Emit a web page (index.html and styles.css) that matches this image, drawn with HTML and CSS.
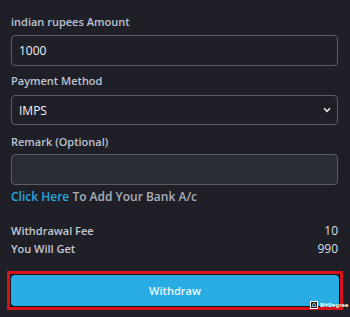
FILE: index.html
```html
<!DOCTYPE html>
<html>
<head>
<meta charset="utf-8">
<link rel="stylesheet" href="styles.css">
</head>
<body>
<div class="page">
  <div class="field f1">
    <div class="label">indian rupees Amount</div>
    <div class="input">1000</div>
  </div>
  <div class="field f2">
    <div class="label">Payment Method</div>
    <div class="input select">
      <span>IMPS</span>
      <svg class="chev" width="8" height="6" viewBox="0 0 8 6"><path d="M1 1.2 L4 4.4 L7 1.2" fill="none" stroke="#e6e8ee" stroke-width="1.6"/></svg>
    </div>
  </div>
  <div class="field f3">
    <div class="label">Remark (Optional)</div>
    <div class="input remark"></div>
  </div>
  <div class="bank"><span class="link">Click Here</span> To Add Your Bank A/c</div>
  <div class="summary">
    <div class="row"><span>Withdrawal Fee</span><span class="val">10</span></div>
    <div class="row"><span>You Will Get</span><span class="val">990</span></div>
  </div>
  <div class="hl">
    <div class="btn">Withdraw</div>
  </div>
</div>
<div class="wm"><span class="wm-logo">⌂</span><span class="wm-text">BitDegree</span></div>
</body>
</html>
```
FILE: styles.css
```css
html, body {
  margin: 0;
  padding: 0;
  background: #1f2027;
  width: 350px;
  height: 317px;
  overflow: hidden;
  font-family: "Open Sans", "Noto Sans", sans-serif;
}
.page {
  padding: 14px 12px 0 11px;
}
.label {
  font-size: 11px;
  line-height: 16px;
  font-weight: 600;
  color: #bcc3d2;
}
.input {
  box-sizing: border-box;
  height: 31px;
  border: 1px solid #5b5e67;
  border-radius: 4px;
  background: #1f2027;
  color: #f2f3f6;
  font-size: 12px;
  display: flex;
  align-items: center;
  padding-left: 7px;
}
.f1 .input { margin-top: 5px; }
.f2 { margin-top: 7px; }
.f2 .input { margin-top: 6px; height: 30px; }
.select {
  justify-content: space-between;
  padding-right: 6px;
}
.chev { display: block; }
.f3 { margin-top: 9px; }
.f3 .input { margin-top: 4px; }
.remark { background: #2a2c35; }
.bank {
  margin-top: 4px;
  font-size: 12px;
  line-height: 16px;
  font-weight: 600;
  color: #a9aeb9;
}
.link { color: #2aa7dd; }
.summary {
  margin-top: 17px;
}
.row {
  display: flex;
  justify-content: space-between;
  font-size: 11px;
  line-height: 18px;
  font-weight: 600;
  color: #c4c9d4;
}
.val {
  font-size: 12px;
  font-weight: 400;
  color: #dcdfe5;
}
.hl {
  margin: 13px -5px 0 -4px;
  border: 3px solid #d8121c;
  padding: 1px;
  background: #15161b;
}
.btn {
  height: 31px;
  border-radius: 4px;
  background: #29abe3;
  color: #eef7fb;
  font-size: 11px;
  font-weight: 600;
  display: flex;
  align-items: center;
  justify-content: center;
}
.wm {
  position: absolute;
  left: 310px;
  top: 301px;
  display: flex;
  align-items: center;
  gap: 2px;
  font-family: "DejaVu Sans", sans-serif;
}
.wm-logo {
  font-size: 7px;
  color: #fff;
  border: 1px solid #fff;
  width: 6px;
  height: 6px;
  line-height: 6px;
  text-align: center;
  background: #222;
}
.wm-text {
  font-size: 5px;
  color: #fff;
  font-weight: 700;
}
```
